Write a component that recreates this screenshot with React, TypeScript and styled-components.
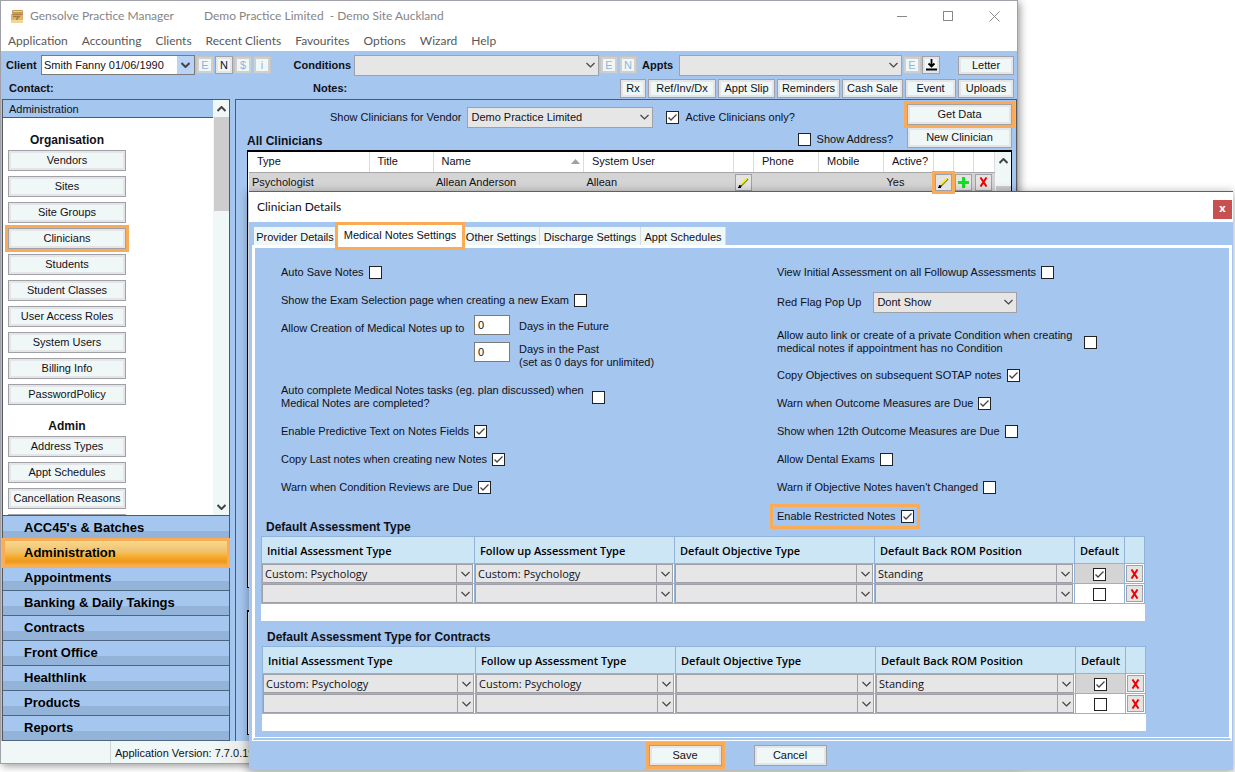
import React from "react";
import styled, { createGlobalStyle, css } from "styled-components";

const blue = "#a5c6ef";
const orange = "#f9ab55";
const edge = "#a0a0a8";
const ink = "#101018";
const pale = "#f0f7f7";
const uiFont = '"Liberation Sans", Arial, sans-serif';
const titleFont = 'Lato, "Open Sans", sans-serif';
const gridFont = '"Open Sans", "Noto Sans", sans-serif';

const GlobalStyle = createGlobalStyle`
  *, *::before, *::after { box-sizing: border-box; }
  body { margin: 0; background: #fff; font: 11px/13px ${uiFont}; color: ${ink}; }
  button, input, select { font: inherit; color: inherit; margin: 0; }
`;

const Desktop = styled.div`
  position: relative;
  height: 100vh;
  min-height: 772px;
  overflow: hidden;
`;

const MainWindow = styled.div`
  display: flex;
  flex-direction: column;
  height: calc(100% - 8px);
  margin-right: 217px;
  border: 1px solid ${edge};
  background: ${blue};
  box-shadow: 2px 2px 8px rgba(0, 0, 0, 0.4);
`;

const TitleBar = styled.header`
  display: flex;
  align-items: center;
  height: 30px;
  padding: 0 14px 0 9px;
  background: #fff;
  color: #858585;
  font: 12px/16px ${titleFont};
`;

const TitleText = styled.span`
  margin: 0 30px 0 6px;
  white-space: pre;
`;

const WindowControls = styled.div`
  display: flex;
  gap: 28px;
  margin-left: auto;
`;

const PlainButton = styled.button`
  display: flex;
  align-items: center;
  justify-content: center;
  width: 18px;
  height: 18px;
  padding: 0;
  border: 0;
  background: none;
`;

const MenuBar = styled.nav`
  display: flex;
  align-items: center;
  gap: 14px;
  height: 20px;
  padding: 0 7px;
  background: #fff;
  color: #585858;
  font: 12px/16px ${titleFont};
  a { color: inherit; text-decoration: none; }
`;

const ToolRow = styled.div<{ $h: number; $gap: number; $top?: number }>`
  display: flex;
  flex: none;
  align-items: center;
  height: ${(p) => p.$h}px;
  padding: ${(p) => p.$top || 0}px 3px 0 5px;
  gap: ${(p) => p.$gap}px;
`;

const BoldLabel = styled.label<{ $w?: number; $align?: string }>`
  flex: none;
  width: ${(p) => (p.$w ? p.$w + "px" : "auto")};
  text-align: ${(p) => p.$align || "left"};
  font-weight: bold;
`;

const Spacer = styled.span<{ $w?: number }>`
  flex: ${(p) => (p.$w ? "none" : "1")};
  width: ${(p) => (p.$w ? p.$w + "px" : "auto")};
`;

const Button = styled.button<{ $w?: number; $h?: number; $hot?: boolean }>`
  display: flex;
  flex: none;
  align-items: center;
  justify-content: center;
  width: ${(p) => (p.$w ? p.$w + "px" : "100%")};
  height: ${(p) => p.$h || 21}px;
  padding: 0;
  border: 1px solid ${edge};
  background: ${pale};
  box-shadow: inset 0 0 0 2px #e5e5e7;
  white-space: nowrap;
  ${(p) => p.$hot && css`outline: 3px solid ${orange}; position: relative;`}
  &:disabled { color: #93b4d8; border-color: #c4c4c4; box-shadow: inset 0 0 0 2px #cfcfcf; }
`;

const SelectShell = styled.span<{ $w?: number; $grow?: number; $h: number; $cell?: boolean; $tone?: "white" }>`
  display: grid;
  flex: ${(p) => (p.$grow ? `1 1 ${p.$grow}px` : "none")};
  width: ${(p) => (p.$w ? p.$w + "px" : "auto")};
  height: ${(p) => p.$h}px;
  min-width: 0;
  select {
    grid-area: 1 / 1;
    width: 100%;
    height: 100%;
    min-width: 0;
    padding: 0 18px 0 ${(p) => (p.$cell || p.$tone ? 2 : 3)}px;
    border: 1px solid ${(p) => (p.$tone ? "#7a7a7a" : edge)};
    border-radius: 0;
    background: ${(p) => (p.$tone ? "#fff" : "#e6e6e6")};
    appearance: none;
  }
`;

const SelectArrow = styled.span<{ $cell?: boolean; $tone?: "white" }>`
  grid-area: 1 / 1;
  justify-self: end;
  display: flex;
  align-items: center;
  justify-content: center;
  width: 17px;
  margin: ${(p) => (p.$tone ? 1 : 0)}px;
  border-left: ${(p) => (p.$cell ? `1px solid ${edge}` : "0")};
  background: ${(p) => (p.$tone ? "#b9d3f6" : "none")};
  pointer-events: none;
`;

const Tick = styled.span`
  display: inline-grid;
  flex: none;
  width: 13px;
  height: 13px;
  input {
    grid-area: 1 / 1;
    width: 13px;
    height: 13px;
    border: 1px solid #222;
    border-radius: 0;
    background: #fff;
    appearance: none;
  }
  svg { grid-area: 1 / 1; visibility: hidden; pointer-events: none; }
  input:checked + svg { visibility: visible; }
`;

const Workspace = styled.div`
  display: flex;
  flex: 1;
  min-height: 0;
  gap: 5px;
  padding-left: 1px;
`;

const SidePane = styled.aside`
  display: flex;
  flex-direction: column;
  width: 228px;
  border: 1px solid #55585e;
  border-bottom: 0;
`;

const SideScroll = styled.div`
  display: flex;
  flex: 1;
  min-height: 0;
  border-bottom: 1px solid #55585e;
  background: #fff;
`;

const SideList = styled.div`
  flex: 1;
  overflow: hidden;
`;

const SideHeading = styled.div`
  height: 18px;
  margin-bottom: 13px;
  padding: 3px 6px;
  border-bottom: 1px solid #55585e;
  background: ${blue};
`;

const SideGroup = styled.section`
  display: flex;
  flex-direction: column;
  gap: 5px;
  width: 118px;
  margin: 0 0 12px 5px;
  h2 {
    margin: 2px 0 -2px;
    text-align: center;
    font: bold 12px/14px ${uiFont};
  }
`;

const ScrollTrack = styled.div`
  display: flex;
  flex-direction: column;
  align-items: center;
  width: 16px;
  background: ${pale};
`;

const ScrollThumb = styled.div<{ $h: number }>`
  width: 15px;
  height: ${(p) => p.$h}px;
  background: #cdcdcd;
`;

const ScrollCap = styled.span<{ $end?: boolean }>`
  display: flex;
  align-items: center;
  justify-content: center;
  height: 17px;
  margin-top: ${(p) => (p.$end ? "auto" : "0")};
`;

const NavList = styled.nav`
  flex: none;
`;

const NavItem = styled.a<{ $active?: boolean }>`
  position: relative;
  display: block;
  height: 25px;
  padding: 4px 21px;
  border-bottom: 1px solid #4c6580;
  background: linear-gradient(${blue} 62%, #93b4d8 62%);
  color: #000;
  font: bold 13px/16px ${uiFont};
  text-decoration: none;
  ${(p) =>
    p.$active &&
    css`
      z-index: 1;
      border-color: ${orange};
      background: linear-gradient(#f9d98a, #efc070 45%, #f8b83c 55%, #ee981c 85%, #f6ad3e);
      &::after { content: ""; position: absolute; inset: -3px -1px -3px -1px; border: 3px solid ${orange}; }
    `}
`;

const MainPane = styled.main`
  display: flex;
  flex: 1;
  flex-direction: column;
  min-width: 0;
  padding: 0 4px 6px 11px;
  border: 1px solid #55585e;
  border-bottom: 0;
`;

const Filters = styled.div`
  display: flex;
  height: 50px;
`;

const FilterArea = styled.div`
  display: flex;
  flex: 1;
  flex-direction: column;
  padding-top: 6px;
`;

const FilterRow = styled.div<{ $end?: boolean }>`
  display: flex;
  align-items: center;
  gap: 6px;
  height: 22px;
  padding-left: ${(p) => (p.$end ? 0 : 83)}px;
  padding-right: ${(p) => (p.$end ? 14 : 0)}px;
  label { display: flex; align-items: center; gap: 6px; }
`;

const PaneTitle = styled.h1`
  flex: 1;
  margin: 4px 0 0;
  font: bold 12px/14px ${uiFont};
`;

const FilterButtons = styled.div`
  display: flex;
  flex-direction: column;
  gap: 2px;
  width: 105px;
  padding-top: 4px;
`;

const GridFrame = styled.div<{ $h?: number }>`
  display: flex;
  flex: ${(p) => (p.$h ? "none" : "1")};
  height: ${(p) => (p.$h ? p.$h + "px" : "auto")};
  padding-left: 1px;
  border: 1px solid #000;
  border-top-width: 2px;
  background: #fff;
`;

const ClinicianTable = styled.table`
  flex: 1;
  align-self: flex-start;
  width: 100%;
  border-collapse: collapse;
  table-layout: fixed;
  th, td { padding: 0; text-align: left; font-weight: normal; white-space: nowrap; }
  th { height: 20px; padding-left: 8px; border-right: 1px solid #dcdcdc; border-bottom: 1px solid #a8a8a8; }
  td { height: 20px; padding-left: 3px; background: #d4d4d4; }
  td.tool { padding-left: 1px; }
`;

const NameHead = styled.span`
  display: flex;
  align-items: center;
  justify-content: space-between;
  padding-right: 3px;
`;

const IconButton = styled.button<{ $hot?: boolean }>`
  display: flex;
  align-items: center;
  justify-content: center;
  width: 17px;
  height: 17px;
  padding: 0;
  border: 1px solid ${edge};
  background: #e4e4e4;
  ${(p) => p.$hot && css`position: relative; z-index: 3; outline: 3px solid ${orange};`}
`;

const StatusBar = styled.footer`
  display: flex;
  flex: none;
  height: 22px;
  background: linear-gradient(90deg, ${pale} 210px, #e8e8e4 250px);
  span { padding: 6px 4px; }
  span + span { border-left: 1px solid #d0d4d4; }
`;

const Dialog = styled.section`
  position: absolute;
  z-index: 2;
  top: 191px;
  left: 249px;
  right: 2px;
  border-top: 1px solid #606068;
  background: ${blue};
  box-shadow: 0 2px 9px 1px rgba(0, 0, 0, 0.32);
`;

const DialogTitle = styled.header`
  display: flex;
  align-items: center;
  justify-content: space-between;
  height: 30px;
  padding: 4px 1px 0 8px;
  background: #fff;
  h2 { margin: 0 0 4px; font: 12px/16px ${titleFont}; }
`;

const CloseButton = styled.button`
  width: 19px;
  height: 19px;
  padding: 0 0 2px;
  border: 0;
  background: #c75050;
  color: #fff;
  font: bold 11px/16px ${gridFont};
`;

const Tabs = styled.div`
  display: flex;
  align-items: flex-end;
  height: 23px;
  padding-left: 5px;
`;

const Tab = styled.button<{ $w: number; $on?: boolean }>`
  flex: none;
  width: ${(p) => p.$w}px;
  height: 18px;
  padding: 2px 0 0;
  border: 0;
  border-right: 1px solid #d8dcdc;
  background: ${pale};
  white-space: nowrap;
  ${(p) =>
    p.$on &&
    css`
      position: relative;
      height: 24px;
      margin-bottom: -3px;
      padding: 0 0 1px;
      border: 0;
      background: #fff;
      outline: 3px solid ${orange};
      outline-offset: -1px;
    `}
`;

const Panel = styled.div`
  margin: 0 1px 0 3px;
  padding: 10px 0 6px 7px;
  border: 3px solid #fff;
  border-bottom: 4px double #fff;
`;

const Settings = styled.div`
  display: grid;
  grid-template-columns: 496px 1fr;
  padding-left: 4px;
`;

const Column = styled.div`
  display: flex;
  flex-direction: column;
`;

const Setting = styled.div<{ $top?: number; $gap?: number }>`
  display: flex;
  align-items: center;
  gap: ${(p) => p.$gap || 5}px;
  height: 28px;
  margin-top: ${(p) => p.$top || 0}px;
  padding-left: 15px;
`;

const HotSetting = styled(Setting)`
  align-self: flex-start;
  height: 25px;
  margin-left: 8px;
  padding: 0 3px 0 4px;
  border: 3px solid ${orange};
`;

const DayLimits = styled.div`
  display: grid;
  grid-template-columns: 185px 36px auto;
  grid-auto-rows: 27px;
  column-gap: 8px;
  height: 56px;
  padding-left: 15px;
  span { padding-top: 8px; }
`;

const DayLabel = styled.label<{ $tall?: boolean }>`
  padding: ${(p) => (p.$tall ? 2 : 6)}px 0 0 1px;
`;

const NumberInput = styled.input`
  width: 36px;
  height: 20px;
  margin-top: 1px;
  padding: 0 3px;
  border: 1px solid #7a7a7a;
`;

const SectionTitle = styled.h3<{ $top: number; $left?: number }>`
  height: 19px;
  margin: ${(p) => p.$top}px 0 0 ${(p) => p.$left || 0}px;
  font: bold 12px/20px ${uiFont};
`;

const AssessmentFrame = styled.div<{ $left?: number }>`
  margin: 0 ${(p) => 84 - (p.$left || 0)}px 0 ${(p) => (p.$left || 0) - 1}px;
  padding-bottom: 17px;
  background: #fff;
`;

const AssessmentTable = styled.table`
  width: 100%;
  border-collapse: collapse;
  table-layout: fixed;
  font: 11px/14px ${gridFont};
  th, td { padding: 0; border: 1px solid #92b3d8; }
  th { height: 27px; padding: 2px 0 0 5px; background: #cde6f6; text-align: left; font-weight: 600; color: #000; white-space: nowrap; }
  td { height: 20px; text-align: center; }
  td.pick { padding: 0 1px 0 0; }
  td > * { vertical-align: middle; }
  tr.current td.flag { background: #d4d4d4; }
  th.flag { padding: 2px 0 0; text-align: center; }
  td ${IconButton} { margin: 0 auto; }
`;

const DialogFooter = styled.footer`
  display: flex;
  justify-content: center;
  gap: 32px;
  height: 29px;
  padding: 4px 7px 0 0;
`;

const Chevron = ({ up, heavy }: { up?: boolean; heavy?: boolean }) => (
  <svg width="9" height="6" viewBox="0 0 9 6" aria-hidden="true">
    <path d={up ? "M.5 5 4.500 1l4 4" : "M.5 1l4 4 4-4"} fill="none" stroke="#444" strokeWidth={heavy ? 2 : 1.2} />
  </svg>
);

const Pencil = () => (
  <svg width="11" height="11" viewBox="0 0 11 11" aria-hidden="true">
    <path d="M3 9 10 2" stroke="#444" strokeWidth="1.200" />
    <path d="M3 7.500 9 1.500" stroke="#f4f000" strokeWidth="2" />
    <path d="M.5 10.500 1 8l2 .5.500 1.500z" fill="#000" />
    <path d="M0 10.500h3" stroke="#000" strokeWidth="1" />
  </svg>
);

const Plus = () => (
  <svg width="11" height="11" viewBox="0 0 11 11" aria-hidden="true">
    <path d="M5.500 0v11M0 5.500h11" stroke="#10e020" strokeWidth="3" />
  </svg>
);

const Cross = () => (
  <svg width="9" height="10" viewBox="0 0 9 10" aria-hidden="true">
    <path d="M1.500 .5 7.500 9.500M7.500 .5 1.500 9.500" stroke="#f00000" strokeWidth="2" />
  </svg>
);

const Jar = () => (
  <svg width="14" height="15" viewBox="0 0 14 15" aria-hidden="true">
    <rect x="2" y="1" width="11" height="4" rx="1" fill="#c89b52" />
    <rect x="3" y="2" width="9" height="1" fill="#ecd09a" />
    <rect x="1" y="5" width="12" height="9" rx="1" fill="#dfb368" />
    <rect x="1" y="11" width="12" height="3" fill="#f1d69c" />
    <path d="M3 7.500h6l-2 2v1.500" fill="none" stroke="#a07a3c" strokeWidth="1.500" />
    <path d="M2 5.500h11" stroke="#a8854a" />
  </svg>
);

type SelectProps = { label: string; value?: string; w?: number; grow?: number; h?: number; cell?: boolean; tone?: "white"; id?: string };
const Select = ({ label, value = "", w, grow, h = 21, cell, tone, id }: SelectProps) => (
  <SelectShell $w={w} $grow={grow} $h={h} $cell={cell} $tone={tone}>
    <select id={id} aria-label={label} defaultValue={value}>
      <option>{value}</option>
    </select>
    <SelectArrow $cell={cell} $tone={tone}>
      <Chevron heavy={!!tone} />
    </SelectArrow>
  </SelectShell>
);

const Check = ({ id, on, label }: { id?: string; on?: boolean; label?: string }) => (
  <Tick>
    <input id={id} type="checkbox" defaultChecked={on} aria-label={label} />
    <svg width="13" height="13" viewBox="0 0 13 13" aria-hidden="true">
      <path d="M2.500 6.500 5 9l5.500-5.500" fill="none" stroke="#444" strokeWidth="1.300" />
    </svg>
  </Tick>
);

type OptionProps = { id: string; text: React.ReactNode; on?: boolean; top?: number; gap?: number; hot?: boolean };
const Option = ({ id, text, on, top, gap, hot }: OptionProps) => {
  const Row = hot ? HotSetting : Setting;
  return (
    <Row $top={top} $gap={gap}>
      <label htmlFor={id}>{text}</label>
      <Check id={id} on={on} />
    </Row>
  );
};

const organisation = ["Vendors", "Sites", "Site Groups", "Clinicians", "Students", "Student Classes", "User Access Roles", "System Users", "Billing Info", "PasswordPolicy"];
const admin = ["Address Types", "Appt Schedules", "Cancellation Reasons"];
const modules = ["ACC45's & Batches", "Administration", "Appointments", "Banking & Daily Takings", "Contracts", "Front Office", "Healthlink", "Products", "Reports"];
const menus = ["Application", "Accounting", "Clients", "Recent Clients", "Favourites", "Options", "Wizard", "Help"];
const actions: [string, number][] = [["Rx", 26], ["Ref/Inv/Dx", 68], ["Appt Slip", 57], ["Reminders", 63], ["Cash Sale", 61], ["Event", 51], ["Uploads", 56]];

const Assessments = ({ name, left }: { name: string; left?: number }) => (
  <AssessmentFrame $left={left}>
    <AssessmentTable aria-label={name}>
      <colgroup>
        <col />
        <col style={{ width: 200 }} />
        <col style={{ width: 200 }} />
        <col style={{ width: 200 }} />
        <col style={{ width: 50 }} />
        <col style={{ width: 20 }} />
      </colgroup>
      <thead>
        <tr>
          <th>Initial Assessment Type</th>
          <th>Follow up Assessment Type</th>
          <th>Default Objective Type</th>
          <th>Default Back ROM Position</th>
          <th className="flag">Default</th>
          <th aria-label="Remove" />
        </tr>
      </thead>
      <tbody>
        {[["Custom: Psychology", "Custom: Psychology", "", "Standing"], ["", "", "", ""]].map((row, i) => (
          <tr key={i} className={i === 0 ? "current" : undefined}>
            {row.map((v, j) => (
              <td key={j} className="pick">
                <Select label={`${name} ${j + 1}`} value={v} h={19} cell />
              </td>
            ))}
            <td className="flag">
              <Check on={i === 0} label="Default" />
            </td>
            <td>
              <IconButton aria-label="Remove">
                <Cross />
              </IconButton>
            </td>
          </tr>
        ))}
      </tbody>
    </AssessmentTable>
  </AssessmentFrame>
);

export default function App() {
  return (
    <Desktop>
      <GlobalStyle />
      <MainWindow>
        <TitleBar>
          <Jar />
          <TitleText>Gensolve Practice Manager</TitleText>
          <span>Demo Practice Limited&nbsp; - Demo Site Auckland</span>
          <WindowControls>
            <PlainButton aria-label="Minimise">
              <svg width="11" height="11"><path d="M0 5.500h10" stroke="#888" /></svg>
            </PlainButton>
            <PlainButton aria-label="Maximise">
              <svg width="11" height="11"><rect x=".5" y=".5" width="9" height="9" fill="none" stroke="#888" /></svg>
            </PlainButton>
            <PlainButton aria-label="Close">
              <svg width="11" height="11"><path d="M.5.5l10 10M10.500.5l-10 10" stroke="#888" /></svg>
            </PlainButton>
          </WindowControls>
        </TitleBar>
        <MenuBar>
          {menus.map((m) => (
            <a key={m} href="#">{m}</a>
          ))}
        </MenuBar>

        <ToolRow $h={27} $gap={1} $top={1}>
          <BoldLabel htmlFor="client" $w={34}>Client</BoldLabel>
          <Select id="client" label="Client" value="Smith Fanny 01/06/1990" w={154} h={20} tone="white" />
          <Button $w={18} $h={18} disabled>E</Button>
          <Button $w={18} $h={18}>N</Button>
          <Button $w={18} $h={18} disabled>$</Button>
          <Button $w={18} $h={18} disabled>i</Button>
          <BoldLabel htmlFor="conditions" $w={79} $align="right">Conditions</BoldLabel>
          <Spacer $w={1} />
          <Select id="conditions" label="Conditions" grow={245} />
          <Button $w={18} $h={18} disabled>E</Button>
          <Button $w={18} $h={18} disabled>N</Button>
          <Spacer $w={3} />
          <BoldLabel htmlFor="appts" $w={36}>Appts</BoldLabel>
          <Select id="appts" label="Appts" grow={223} />
          <Button $w={18} $h={18} disabled>E</Button>
          <Button $w={18} $h={18} aria-label="Download">
            <svg width="11" height="12" viewBox="0 0 11 12"><path d="M5.500 0v7M2.500 4.500l3 3 3-3M0 10.500h11" fill="none" stroke="#000" strokeWidth="1.800" /></svg>
          </Button>
          <Spacer $w={16} />
          <Button $w={56} $h={19}>Letter</Button>
        </ToolRow>
        <ToolRow $h={21} $gap={2}>
          <Spacer $w={1} />
          <BoldLabel as="span" $w={302}>Contact:</BoldLabel>
          <BoldLabel as="span">Notes:</BoldLabel>
          <Spacer />
          {actions.map(([t, w]) => (
            <Button key={t} $w={w} $h={19}>{t}</Button>
          ))}
        </ToolRow>

        <Workspace>
          <SidePane>
            <SideScroll>
              <SideList>
                <SideHeading>Administration</SideHeading>
                <SideGroup>
                  <h2>Organisation</h2>
                  {organisation.map((t) => (
                    <Button key={t} $hot={t === "Clinicians"}>{t}</Button>
                  ))}
                </SideGroup>
                <SideGroup>
                  <h2>Admin</h2>
                  {admin.map((t) => (
                    <Button key={t}>{t}</Button>
                  ))}
                  <Button aria-label="More" />
                </SideGroup>
              </SideList>
              <ScrollTrack>
                <ScrollCap><Chevron up heavy /></ScrollCap>
                <ScrollThumb $h={94} />
                <ScrollCap $end><Chevron heavy /></ScrollCap>
              </ScrollTrack>
            </SideScroll>
            <NavList>
              {modules.map((t) => (
                <NavItem key={t} href="#" $active={t === "Administration"}>{t}</NavItem>
              ))}
            </NavList>
          </SidePane>

          <MainPane>
            <Filters>
              <FilterArea>
                <FilterRow>
                  <label htmlFor="vendor">Show Clinicians for Vendor</label>
                  <Select id="vendor" label="Vendor" value="Demo Practice Limited" w={186} />
                  <Spacer $w={1} />
                  <label><Check on />Active Clinicians only?</label>
                </FilterRow>
                <FilterRow $end>
                  <PaneTitle>All Clinicians</PaneTitle>
                  <label><Check />Show Address?</label>
                </FilterRow>
              </FilterArea>
              <FilterButtons>
                <Button $hot>Get Data</Button>
                <Button>New Clinician</Button>
              </FilterButtons>
            </Filters>
            <GridFrame>
              <ClinicianTable>
                <colgroup>
                  <col style={{ width: 120 }} />
                  <col style={{ width: 64 }} />
                  <col />
                  <col style={{ width: 150 }} />
                  <col style={{ width: 20 }} />
                  <col style={{ width: 65 }} />
                  <col style={{ width: 65 }} />
                  <col style={{ width: 50 }} />
                  <col style={{ width: 20 }} />
                  <col style={{ width: 20 }} />
                  <col style={{ width: 21 }} />
                </colgroup>
                <thead>
                  <tr>
                    <th>Type</th>
                    <th>Title</th>
                    <th>
                      <NameHead>
                        Name
                        <svg width="9" height="5"><path d="M4.500 0 9 5H0z" fill="#a0a0a0" /></svg>
                      </NameHead>
                    </th>
                    <th>System User</th>
                    <th />
                    <th>Phone</th>
                    <th>Mobile</th>
                    <th>Active?</th>
                    <th />
                    <th />
                    <th />
                  </tr>
                </thead>
                <tbody>
                  <tr>
                    <td>Psychologist</td>
                    <td />
                    <td>Allean Anderson</td>
                    <td>Allean</td>
                    <td className="tool"><IconButton aria-label="Edit user"><Pencil /></IconButton></td>
                    <td />
                    <td />
                    <td>Yes</td>
                    <td className="tool"><IconButton $hot aria-label="Edit clinician"><Pencil /></IconButton></td>
                    <td className="tool"><IconButton aria-label="Add"><Plus /></IconButton></td>
                    <td className="tool"><IconButton aria-label="Delete"><Cross /></IconButton></td>
                  </tr>
                </tbody>
              </ClinicianTable>
              <ScrollTrack>
                <ScrollCap><Chevron up heavy /></ScrollCap>
                <ScrollCap />
                <ScrollThumb $h={380} />
              </ScrollTrack>
            </GridFrame>
            <SectionTitle as="div" $top={3} />
            <GridFrame $h={125} />
          </MainPane>
        </Workspace>
        <StatusBar>
          <Spacer as="span" $w={109} />
          <span>Application Version: 7.7.0.19</span>
        </StatusBar>
      </MainWindow>

      <Dialog role="dialog" aria-labelledby="dialog-title">
        <DialogTitle>
          <h2 id="dialog-title">Clinician Details</h2>
          <CloseButton aria-label="Close dialog">x</CloseButton>
        </DialogTitle>
        <Tabs role="tablist">
          <Tab role="tab" $w={83}>Provider Details</Tab>
          <Tab role="tab" $w={126} $on aria-selected>Medical Notes Settings</Tab>
          <Tab role="tab" $w={77}>Other Settings</Tab>
          <Tab role="tab" $w={101}>Discharge Settings</Tab>
          <Tab role="tab" $w={85}>Appt Schedules</Tab>
        </Tabs>
        <Panel>
          <Settings>
            <Column>
              <Option id="autosave" text="Auto Save Notes" />
              <Option id="exam" text="Show the Exam Selection page when creating a new Exam" />
              <DayLimits>
                <span>Allow Creation of Medical Notes up to</span>
                <NumberInput id="future" defaultValue="0" />
                <DayLabel htmlFor="future">Days in the Future</DayLabel>
                <span />
                <NumberInput id="past" defaultValue="0" />
                <DayLabel $tall htmlFor="past">Days in the Past<br />(set as 0 days for unlimited)</DayLabel>
              </DayLimits>
              <Option id="complete" top={13} gap={8} text={<>Auto complete Medical Notes tasks (eg. plan discussed) when<br />Medical Notes are completed?</>} />
              <Option id="predictive" top={6} on text="Enable Predictive Text on Notes Fields" />
              <Option id="copylast" on text="Copy Last notes when creating new Notes" />
              <Option id="reviews" on text="Warn when Condition Reviews are Due" />
              <SectionTitle $top={16}>Default Assessment Type</SectionTitle>
            </Column>
            <Column>
              <Option id="followup" text="View Initial Assessment on all Followup Assessments" />
              <Setting $top={2} $gap={12}>
                <label htmlFor="redflag">Red Flag Pop Up</label>
                <Select id="redflag" label="Red Flag Pop Up" value="Dont Show" w={144} />
              </Setting>
              <Option id="autolink" top={12} gap={12} text={<>Allow auto link or create of a private Condition when creating<br />medical notes if appointment has no Condition</>} />
              <Option id="objectives" top={5} on text="Copy Objectives on subsequent SOTAP notes" />
              <Option id="outcome" on text="Warn when Outcome Measures are Due" />
              <Option id="outcome12" text="Show when 12th Outcome Measures are Due" />
              <Option id="dental" text="Allow Dental Exams" />
              <Option id="unchanged" text="Warn if Objective Notes haven't Changed" />
              <Option id="restricted" top={3} hot on text="Enable Restricted Notes" />
            </Column>
          </Settings>
          <Assessments name="Default Assessment Type" />
          <SectionTitle $top={6} $left={5}>Default Assessment Type for Contracts</SectionTitle>
          <Assessments name="Default Assessment Type for Contracts" left={1} />
        </Panel>
        <DialogFooter>
          <Button $w={73} $hot>Save</Button>
          <Button $w={73}>Cancel</Button>
        </DialogFooter>
      </Dialog>
    </Desktop>
  );
}
